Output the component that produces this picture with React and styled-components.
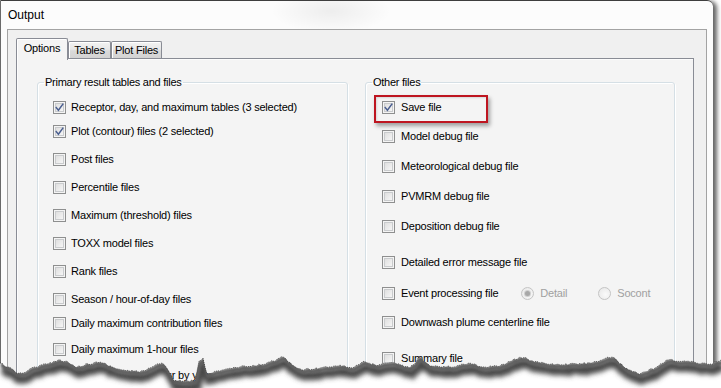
import React from "react";
import styled, { createGlobalStyle } from "styled-components";

const Global = createGlobalStyle`
  html, body { margin: 0; padding: 0; background: #fff; }
  body { font-family: "Liberation Sans", Arial, sans-serif; }
`;

const Page = styled.div`
  position: relative;
  width: 721px;
  height: 388px;
  overflow: hidden;
  background: #fff;
`;

const Window = styled.div`
  position: relative;
  width: 713px;
  height: 420px;
  box-sizing: border-box;
  display: flex;
  flex-direction: column;
  border-top: 1px solid #3e3e3e;
  border-left: 1px solid #6a6a6a;
  border-top-right-radius: 6px;
  background:
    radial-gradient(ellipse 60px 22px at 330px 10px, rgba(0,0,0,0.06), rgba(0,0,0,0) 100%),
    #fcfcfc;
  box-shadow: 3px 2px 4px 1px rgba(0, 0, 0, 0.6);
`;

const TitleBar = styled.div`
  height: 28px;
  line-height: 28px;
  padding-left: 7px;
  font-family: "Liberation Sans", Arial, sans-serif;
  font-size: 12px;
  color: #000;
`;

const Client = styled.div`
  flex: 1;
  margin: 0 6px 0 6px;
  display: flex;
  flex-direction: column;
  padding: 8px 12px 0 8px;
  background: #f0f0f0;
  border: 1px solid #a3a3a3;
  border-bottom: none;
`;

const TabStrip = styled.div`
  display: flex;
  align-items: flex-end;
  height: 20px;
  position: relative;
  z-index: 1;
`;

const Tab = styled.div`
  box-sizing: border-box;
  width: ${(p) => p.$w}px;
  height: ${(p) => (p.$active ? 22 : 17)}px;
  margin-bottom: ${(p) => (p.$active ? -2 : 0)}px;
  border: 1px solid #898c95;
  border-bottom: none;
  border-radius: 2px 2px 0 0;
  text-align: center;
  font-size: 11px;
  letter-spacing: -0.2px;
  line-height: ${(p) => (p.$active ? 19 : 16)}px;
  color: #000;
  background: ${(p) =>
    p.$active
      ? "#f4f4f4"
      : "linear-gradient(#f2f2f2, #e8e8e8 45%, #dadada 55%, #d3d3d3)"};
  box-shadow: inset 1px 1px 0 #fff;
`;

const TabPanel = styled.div`
  flex: 1;
  border: 1px solid #898c95;
  border-bottom: none;
  background: #f4f4f4;
  box-shadow: inset 1px 1px 0 #fcfcfc;
  padding: 16px 0 0 20px;
  display: grid;
  grid-template-columns: 311px 310px;
  column-gap: 17px;
  align-items: start;
`;

const GroupBox = styled.fieldset`
  margin: 0;
  padding: 0;
  min-width: 0;
  height: 330px;
  border: 1px solid #d5dfe5;
  border-radius: 3px;
  box-shadow: inset 1px 1px 0 #fff, 1px 1px 0 #fff;
`;

const Legend = styled.legend`
  margin-left: 6px;
  padding: 0 1px;
  font-size: 11px;
  line-height: 14px;
  letter-spacing: -0.25px;
  color: #000;
`;

const GroupContent = styled.div`
  padding: 10px 0 0 ${(p) => p.$pl}px;
  display: flex;
  flex-direction: column;
`;

const Row = styled.div`
  display: flex;
  align-items: center;
  height: 16px;
  margin-top: ${(p) => p.$mt || 0}px;
  font-size: 11px;
  letter-spacing: -0.2px;
  color: #000;
  white-space: nowrap;
`;

const Label = styled.span`
  margin-left: ${(p) => p.$ml || 5}px;
`;

const Box = styled.span`
  box-sizing: border-box;
  flex: none;
  width: 13px;
  height: 13px;
  border: 1px solid #8e8f8f;
  background: linear-gradient(135deg, #d9d9d9 0%, #eeeeee 60%, #fbfbfb 100%);
  box-shadow: inset 0 0 0 1px #f4f4f4, inset 0 0 0 2px #c9cbcd;
  display: flex;
  align-items: center;
  justify-content: center;
`;

const RadioGroup = styled.div`
  display: flex;
  align-items: center;
  margin-left: 23px;
  gap: 31px;
  color: #a0a0a0;
`;

const RadioItem = styled.span`
  display: flex;
  align-items: center;
  gap: 6px;
`;

const RadioCircle = styled.span`
  box-sizing: border-box;
  width: 13px;
  height: 13px;
  border-radius: 50%;
  border: 1px solid #c4c4c4;
  background: radial-gradient(circle at 60% 60%, #fafafa, #e6e6e6);
  display: flex;
  align-items: center;
  justify-content: center;
  &::after {
    content: "";
    display: ${(p) => (p.$checked ? "block" : "none")};
    width: 5px;
    height: 5px;
    border-radius: 50%;
    background: #a8a8a8;
    box-shadow: 0 0 0 1px #d0d0d0;
  }
`;

const Highlight = styled.div`
  position: absolute;
  left: 374px;
  top: 95px;
  width: 114px;
  height: 28px;
  box-sizing: border-box;
  border: 2px solid #be1520;
  box-shadow: 2px 3px 4px rgba(0, 0, 0, 0.35), inset 1px 1px 2px rgba(0,0,0,0.12);
  pointer-events: none;
`;

const Tear = styled.svg`
  position: absolute;
  left: 0;
  top: 340px;
  width: 721px;
  height: 48px;
`;

function Check({ checked }) {
  return (
    <Box>
      {checked && (
        <svg width="9" height="9" viewBox="0 0 9 9">
          <path d="M1.3 4.6 L3.4 7.2 L7.8 1.2" fill="none" stroke="#4a5e8f" strokeWidth="1.5" strokeLinecap="square" />
        </svg>
      )}
    </Box>
  );
}

function CheckRow({ checked, mt, ml, children, extra }) {
  return (
    <Row $mt={mt}>
      <Check checked={checked} />
      <Label $ml={ml}>{children}</Label>
      {extra}
    </Row>
  );
}

const leftRows = [
  ["Receptor, day, and maximum tables (3 selected)", true, 0],
  ["Plot (contour) files (2 selected)", true, 8],
  ["Post files", false, 12],
  ["Percentile files", false, 12],
  ["Maximum (threshold) files", false, 12],
  ["TOXX model files", false, 12],
  ["Rank files", false, 12],
  ["Season / hour-of-day files", false, 12],
  ["Daily maximum contribution files", false, 8],
  ["Daily maximum 1-hour files", false, 10],
  ["Maximum daily 1-hour by year", false, 10],
];

const rightRows = [
  ["Save file", true, 0],
  ["Model debug file", false, 13],
  ["Meteorological debug file", false, 14],
  ["PVMRM debug file", false, 14],
  ["Deposition debug file", false, 14],
  ["Detailed error message file", false, 20],
  ["Event processing file", false, 15, true],
  ["Downwash plume centerline file", false, 13],
  ["Summary file", false, 20],
];

// torn edge outline (absolute page coordinates)
const anchors = [
  [0, 363], [8, 367], [16, 373], [26, 372], [34, 367], [48, 364], [58, 360], [66, 361],
  [75, 367], [88, 364], [100, 362], [112, 367], [122, 370], [140, 372], [152, 367],
  [162, 363], [168, 370], [174, 381], [195, 381], [199, 361], [203, 358], [207, 374],
  [222, 370], [240, 367], [255, 366], [270, 362], [283, 357], [292, 365], [302, 370],
  [320, 368], [340, 365], [352, 368], [362, 362], [375, 365], [395, 363], [410, 368],
  [420, 357], [430, 366], [450, 367], [470, 363], [482, 367], [500, 366], [520, 357],
  [540, 363], [560, 365], [590, 363], [612, 357], [625, 368], [640, 374], [655, 368],
  [668, 360], [690, 362], [710, 364], [721, 360],
];

function buildEdge() {
  let s = 12345;
  const rnd = () => {
    s = (s * 16807) % 2147483647;
    return s / 2147483647;
  };
  const pts = [];
  for (let i = 0; i < anchors.length - 1; i++) {
    const [x0, y0] = anchors[i];
    const [x1, y1] = anchors[i + 1];
    const steps = Math.max(1, Math.round((x1 - x0) / 2));
    for (let k = 0; k < steps; k++) {
      const t = k / steps;
      const x = x0 + (x1 - x0) * t;
      const y = y0 + (y1 - y0) * t + (k === 0 ? 0 : (rnd() - 0.5) * 2.2);
      pts.push([x, y - 340]);
    }
  }
  pts.push([721, anchors[anchors.length - 1][1] - 340]);
  return pts;
}

const edgePts = buildEdge();
const edgeLine = edgePts.map((p, i) => `${i ? "L" : "M"}${p[0].toFixed(1)},${p[1].toFixed(1)}`).join(" ");
const edgeFill = `${edgeLine} L721,48 L0,48 Z`;

function TornEdge() {
  return (
    <Tear viewBox="0 0 721 48">
      <defs>
        <clipPath id="below">
          <path d={edgeFill} />
        </clipPath>
        <filter id="blur" x="-5%" y="-50%" width="110%" height="200%">
          <feGaussianBlur stdDeviation="2.4" />
        </filter>
        <filter id="blur2" x="-5%" y="-50%" width="110%" height="200%">
          <feGaussianBlur stdDeviation="1" />
        </filter>
      </defs>
      <path d={edgeFill} fill="#ffffff" />
      <g clipPath="url(#below)">
        <path d={edgeLine} transform="translate(2,6)" fill="none" stroke="#4a4a4a" strokeWidth="9" filter="url(#blur)" />
        <path d={edgeLine} transform="translate(1,2)" fill="none" stroke="#5e5e5e" strokeWidth="3.5" filter="url(#blur2)" />
      </g>
      <path d={edgeLine} fill="none" stroke="#3a3a3a" strokeWidth="0.8" strokeDasharray="1 1" />
    </Tear>
  );
}

export default function App() {
  return (
    <>
      <Global />
      <Page>
        <Window>
          <TitleBar>Output</TitleBar>
          <Client>
            <TabStrip>
              <Tab $active $w={52}>Options</Tab>
              <Tab $w={43}>Tables</Tab>
              <Tab $w={51}>Plot Files</Tab>
            </TabStrip>
            <TabPanel>
              <GroupBox>
                <Legend>Primary result tables and files</Legend>
                <GroupContent $pl={15}>
                  {leftRows.map(([t, c, mt]) => (
                    <CheckRow key={t} checked={c} mt={mt}>
                      {t}
                    </CheckRow>
                  ))}
                </GroupContent>
              </GroupBox>
              <GroupBox>
                <Legend>Other files</Legend>
                <GroupContent $pl={16}>
                  {rightRows.map(([t, c, mt, radios]) => (
                    <CheckRow
                      key={t}
                      checked={c}
                      mt={mt}
                      ml={6}
                      extra={
                        radios ? (
                          <RadioGroup>
                            <RadioItem>
                              <RadioCircle $checked />
                              Detail
                            </RadioItem>
                            <RadioItem>
                              <RadioCircle />
                              Socont
                            </RadioItem>
                          </RadioGroup>
                        ) : null
                      }
                    >
                      {t}
                    </CheckRow>
                  ))}
                </GroupContent>
              </GroupBox>
            </TabPanel>
          </Client>
        </Window>
        <Highlight />
        <TornEdge />
      </Page>
    </>
  );
}
